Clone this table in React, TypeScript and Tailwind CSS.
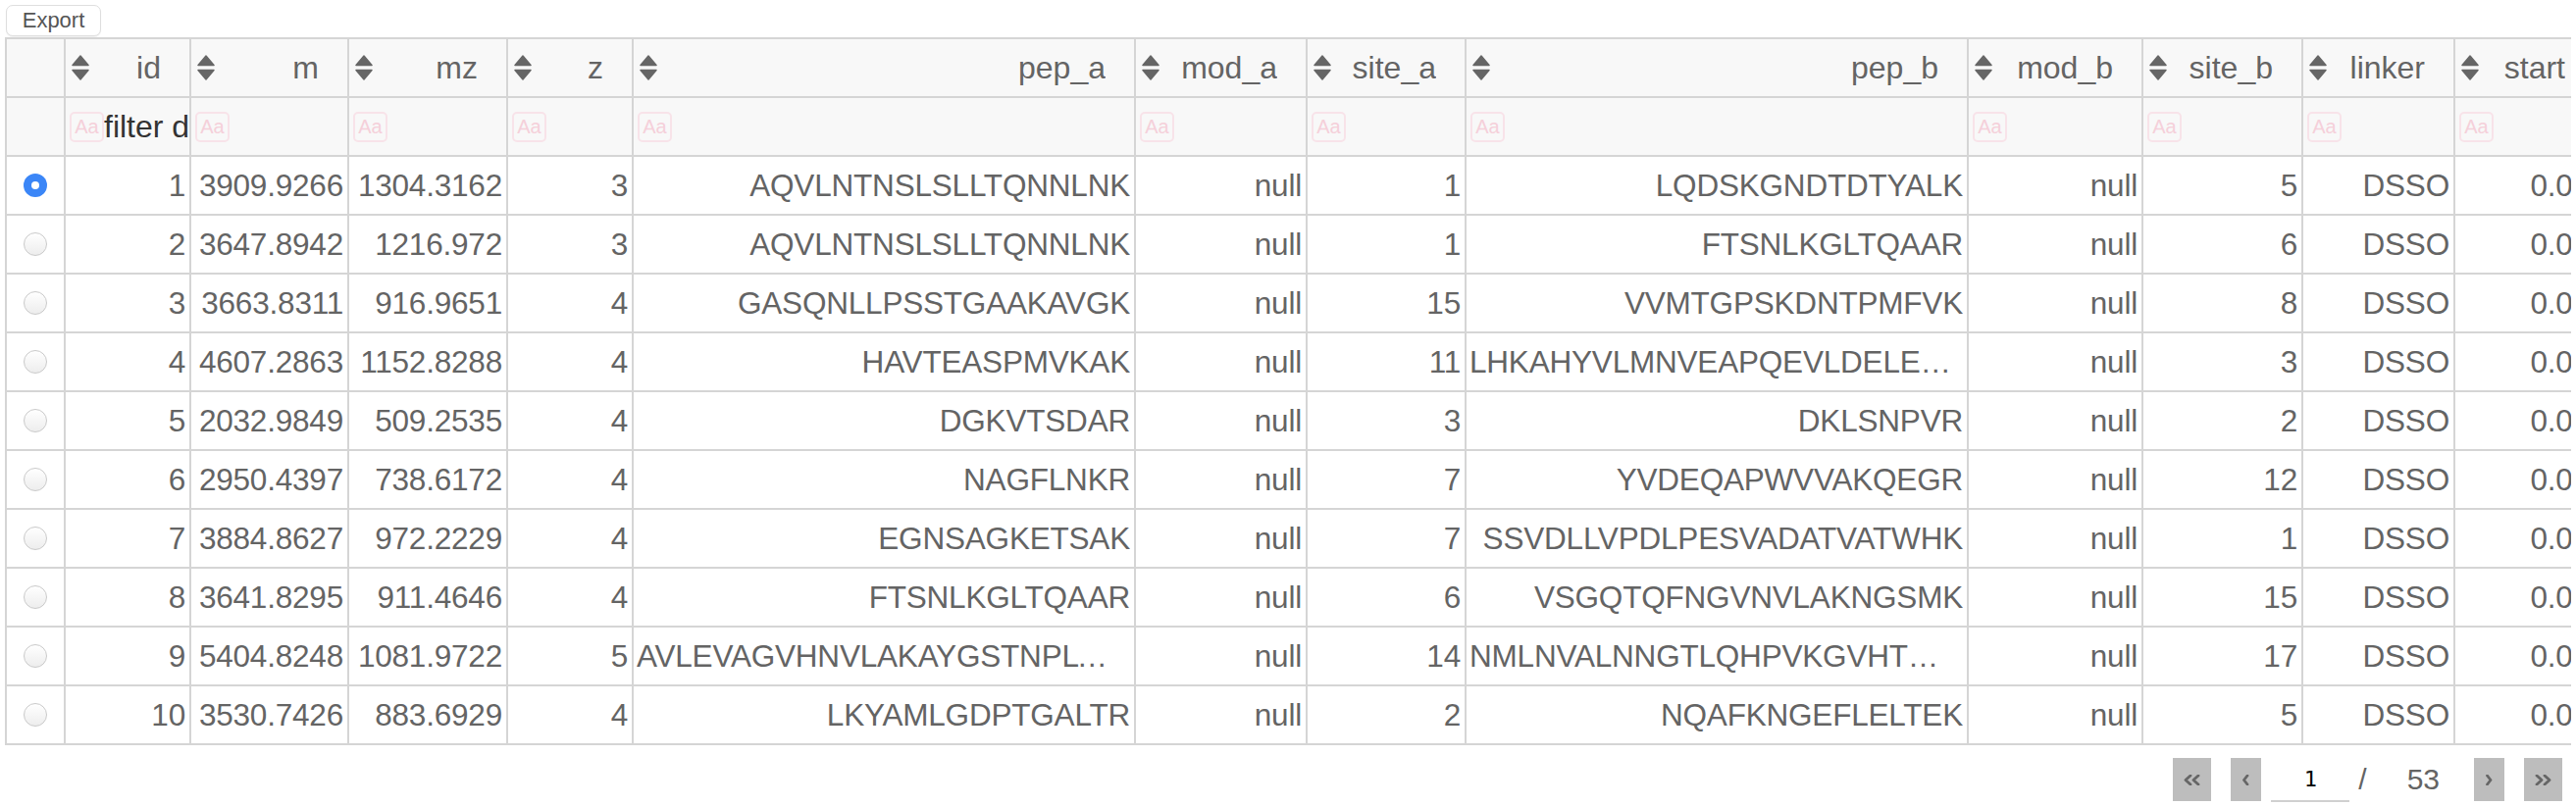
import React from "react";

type Row = {
  id: number;
  m: string;
  mz: string;
  z: number;
  pep_a: string;
  mod_a: string;
  site_a: number;
  pep_b: string;
  mod_b: string;
  site_b: number;
  linker: string;
  start: string;
};

const rows: Row[] = [
  { id: 1, m: "3909.9266", mz: "1304.3162", z: 3, pep_a: "AQVLNTNSLSLLTQNNLNK", mod_a: "null", site_a: 1, pep_b: "LQDSKGNDTDTYALK", mod_b: "null", site_b: 5, linker: "DSSO", start: "0.05" },
  { id: 2, m: "3647.8942", mz: "1216.972", z: 3, pep_a: "AQVLNTNSLSLLTQNNLNK", mod_a: "null", site_a: 1, pep_b: "FTSNLKGLTQAAR", mod_b: "null", site_b: 6, linker: "DSSO", start: "0.05" },
  { id: 3, m: "3663.8311", mz: "916.9651", z: 4, pep_a: "GASQNLLPSSTGAAKAVGK", mod_a: "null", site_a: 15, pep_b: "VVMTGPSKDNTPMFVK", mod_b: "null", site_b: 8, linker: "DSSO", start: "0.05" },
  { id: 4, m: "4607.2863", mz: "1152.8288", z: 4, pep_a: "HAVTEASPMVKAK", mod_a: "null", site_a: 11, pep_b: "LHKAHYVLMNVEAPQEVLDELEHSR", mod_b: "null", site_b: 3, linker: "DSSO", start: "0.05" },
  { id: 5, m: "2032.9849", mz: "509.2535", z: 4, pep_a: "DGKVTSDAR", mod_a: "null", site_a: 3, pep_b: "DKLSNPVR", mod_b: "null", site_b: 2, linker: "DSSO", start: "0.05" },
  { id: 6, m: "2950.4397", mz: "738.6172", z: 4, pep_a: "NAGFLNKR", mod_a: "null", site_a: 7, pep_b: "YVDEQAPWVVAKQEGR", mod_b: "null", site_b: 12, linker: "DSSO", start: "0.05" },
  { id: 7, m: "3884.8627", mz: "972.2229", z: 4, pep_a: "EGNSAGKETSAK", mod_a: "null", site_a: 7, pep_b: "SSVDLLVPDLPESVADATVATWHK", mod_b: "null", site_b: 1, linker: "DSSO", start: "0.05" },
  { id: 8, m: "3641.8295", mz: "911.4646", z: 4, pep_a: "FTSNLKGLTQAAR", mod_a: "null", site_a: 6, pep_b: "VSGQTQFNGVNVLAKNGSMK", mod_b: "null", site_b: 15, linker: "DSSO", start: "0.05" },
  { id: 9, m: "5404.8248", mz: "1081.9722", z: 5, pep_a: "AVLEVAGVHNVLAKAYGSTNPLWMK", mod_a: "null", site_a: 14, pep_b: "NMLNVALNNGTLQHPVKGVHTWMGK", mod_b: "null", site_b: 17, linker: "DSSO", start: "0.05" },
  { id: 10, m: "3530.7426", mz: "883.6929", z: 4, pep_a: "LKYAMLGDPTGALTR", mod_a: "null", site_a: 2, pep_b: "NQAFKNGEFLELTEK", mod_b: "null", site_b: 5, linker: "DSSO", start: "0.05" },
];

const columns: (keyof Row)[] = ["id", "m", "mz", "z", "pep_a", "mod_a", "site_a", "pep_b", "mod_b", "site_b", "linker", "start"];

function SortIcon() {
  return (
    <svg width="18" height="26" viewBox="0 0 18 26" className="shrink-0">
      <path d="M9 1 L17 10.5 H1 Z" fill="#666" stroke="#666" strokeWidth="1.5" strokeLinejoin="round" />
      <path d="M1 15.5 H17 L9 25 Z" fill="#666" stroke="#666" strokeWidth="1.5" strokeLinejoin="round" />
    </svg>
  );
}

function AaIcon() {
  return (
    <span className="flex h-[31px] w-[35px] shrink-0 items-center justify-center rounded-[5px] border-2 border-[#f8e3e9] text-[20px] leading-none text-[#f5d0da]">
      Aa
    </span>
  );
}

function Radio({ checked }: { checked: boolean }) {
  if (checked) {
    return (
      <div className="flex h-[24px] w-[24px] items-center justify-center rounded-full bg-[#3b86f7]">
        <div className="h-[8px] w-[8px] rounded-full bg-white" />
      </div>
    );
  }
  return <div className="h-[24px] w-[24px] rounded-full border border-[#cacaca] bg-linear-to-b from-white to-[#ededed]" />;
}

function PagerButton({ wide, children }: { wide?: boolean; children: React.ReactNode }) {
  return (
    <div className={(wide ? "w-[39px]" : "w-[31px]") + " flex h-[44px] items-center justify-center bg-[#bdbdbd]"}>
      {children}
    </div>
  );
}

function Chevron({ dir, double }: { dir: "left" | "right"; double?: boolean }) {
  const single = dir === "left" ? "M5 1 L1.5 5.5 L5 10" : "M1.5 1 L5 5.5 L1.5 10";
  if (!double) {
    return (
      <svg width="7" height="11" viewBox="0 0 7 11">
        <path d={single} fill="none" stroke="#666" strokeWidth="2.8" strokeLinecap="round" strokeLinejoin="round" />
      </svg>
    );
  }
  const a = dir === "left" ? "M7 1 L2 5.5 L7 10" : "M2 1 L7 5.5 L2 10";
  const b = dir === "left" ? "M15 1 L10 5.5 L15 10" : "M10 1 L15 5.5 L10 10";
  return (
    <svg width="17" height="11" viewBox="0 0 17 11">
      <path d={a} fill="none" stroke="#666" strokeWidth="2.8" strokeLinecap="round" strokeLinejoin="round" />
      <path d={b} fill="none" stroke="#666" strokeWidth="2.8" strokeLinecap="round" strokeLinejoin="round" />
    </svg>
  );
}

export default function App() {
  return (
    <div className="min-h-[822px] bg-white px-[5px] pt-[5px] font-['Liberation_Sans',Arial,sans-serif] text-[#646464]">
      <button className="ml-[1px] flex h-[32px] w-[97px] items-center justify-center rounded-[7px] border border-[#dedede] bg-white text-[22px] leading-none text-[#555] shadow-[0_1px_1px_rgba(0,0,0,0.06)]">
        Export
      </button>
      <div className="mt-[1px] overflow-hidden">
        <div className="grid w-max auto-rows-[58px] grid-cols-[58px_126px_159px_160px_126px_510px_173px_160px_510px_176px_161px_153px_141px] gap-[2px] bg-[#d5d5d5] p-[2px]">
          {/* header */}
          <div className="bg-[#f8f8f8]" />
          {columns.map((c) => (
            <div key={"h-" + c} className="flex items-center bg-[#f8f8f8] pl-[6px] pr-[29px]">
              <SortIcon />
              <span className="flex-1 truncate text-right text-[32px] leading-[40px] text-[#646464]">{c}</span>
            </div>
          ))}
          {/* filter row */}
          <div className="bg-[#f8f8f8]" />
          {columns.map((c) => (
            <div key={"f-" + c} className="flex items-center overflow-hidden bg-[#f8f8f8] pl-[4px]">
              <AaIcon />
              {c === "id" && (
                <input
                  className="h-[40px] min-w-0 flex-1 bg-transparent text-[32px] leading-none text-[#333] outline-none placeholder:text-[#333]"
                  placeholder="filter data"
                  readOnly
                />
              )}
            </div>
          ))}
          {/* data rows */}
          {rows.map((r, i) => (
            <React.Fragment key={r.id}>
              <div className="flex items-center justify-center bg-white">
                <Radio checked={i === 0} />
              </div>
              {columns.map((c) => (
                <div key={c} className="flex items-center overflow-hidden bg-white pl-[3px] pr-[4px]">
                  <span className="block w-full truncate text-right text-[31.5px] leading-[40px] tracking-[-0.2px] text-[#646464]">{String(r[c])}</span>
                </div>
              ))}
            </React.Fragment>
          ))}
        </div>
      </div>
      <div className="mt-[12px] flex items-center justify-end pr-[9px]">
        <PagerButton wide>
          <Chevron dir="left" double />
        </PagerButton>
        <div className="ml-[20px]">
          <PagerButton>
            <Chevron dir="left" />
          </PagerButton>
        </div>
        <div className="ml-[10px] flex h-[46px] w-[80px] items-center justify-center border-b-2 border-[#d0d0d0] pt-[2px] font-['DejaVu_Sans_Mono',monospace] text-[22px] leading-none text-black">
          1
        </div>
        <span className="ml-[9px] text-[30px] leading-none text-[#646464]">/</span>
        <span className="ml-[41px] text-[30px] leading-none text-[#646464]">53</span>
        <div className="ml-[35px]">
          <PagerButton>
            <Chevron dir="right" />
          </PagerButton>
        </div>
        <div className="ml-[20px]">
          <PagerButton wide>
            <Chevron dir="right" double />
          </PagerButton>
        </div>
      </div>
    </div>
  );
}
